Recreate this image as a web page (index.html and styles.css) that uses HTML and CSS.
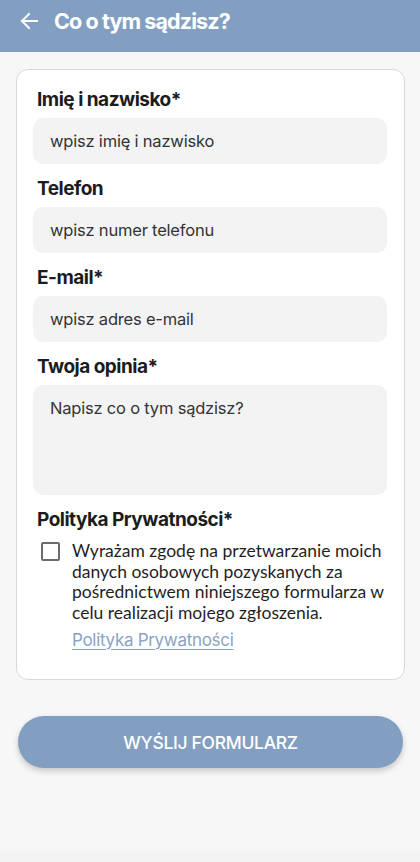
FILE: index.html
```html
<!DOCTYPE html>
<html lang="pl">
<head>
<meta charset="utf-8">
<title>Co o tym sądzisz?</title>
<link rel="stylesheet" href="styles.css">
</head>
<body>
<header class="topbar">
  <svg class="back" width="20" height="20" viewBox="0 0 20 20" aria-hidden="true">
    <path d="M18 10H3M10 3L3 10l7 7" fill="none" stroke="#fff" stroke-width="2" stroke-linecap="square"/>
  </svg>
  <h1 class="title">Co o tym sądzisz?</h1>
</header>
<main class="content">
  <form class="card">
    <label class="label">Imię i nazwisko*</label>
    <div class="field">wpisz imię i nazwisko</div>
    <label class="label">Telefon</label>
    <div class="field">wpisz numer telefonu</div>
    <label class="label">E-mail*</label>
    <div class="field">wpisz adres e-mail</div>
    <label class="label">Twoja opinia*</label>
    <div class="field area">Napisz co o tym sądzisz?</div>
    <label class="label">Polityka Prywatności*</label>
    <div class="consent">
      <span class="checkbox"></span>
      <div class="consent-body">
        <p class="consent-text">Wyrażam zgodę na przetwarzanie moich danych osobowych pozyskanych za pośrednictwem niniejszego formularza w celu realizacji mojego zgłoszenia.</p>
        <a class="policy-link">Polityka Prywatności</a>
      </div>
    </div>
  </form>
  <button class="submit" type="button">WYŚLIJ FORMULARZ</button>
</main>
</body>
</html>
```
FILE: styles.css
```css
* { box-sizing: border-box; }
html, body {
  margin: 0;
  font-family: Inter, "Open Sans", sans-serif;
  color: #1c1c1c;
}
html { background: #f3f3f3; }
body {
  min-height: 862px;
  /* page surface, with the slightly darker system strip along the bottom */
  background: linear-gradient(to bottom, #f7f7f7 849px, #f3f3f3 853px);
}
.topbar {
  height: 52px;
  background: #829fc2;
  display: flex;
  align-items: center;
  padding: 0 0 10px 19px;
  gap: 15px;
}
.back { flex: none; }
.title {
  margin: 0;
  color: #fff;
  font-size: 21.5px;
  font-weight: 700;
  letter-spacing: -0.9px;
}
.content {
  padding: 17px 15px 0 16px;
}
.card {
  background: #fff;
  border: 1px solid #d9d9d9;
  border-radius: 12px;
  padding: 18px 17px 29px 16px;
  display: flex;
  flex-direction: column;
}
.label {
  font-size: 19px;
  font-weight: 700;
  letter-spacing: -0.5px;
  padding-left: 4px;
  line-height: 24px;
  margin-bottom: 6px;
}
.field {
  background: #f3f3f3;
  border-radius: 10px;
  height: 46px;
  display: flex;
  align-items: center;
  padding-left: 17px;
  font-size: 16.5px;
  color: #333;
  margin-bottom: 13px;
  letter-spacing: -0.2px;
}
.field.area {
  height: 110px;
  align-items: flex-start;
  padding-top: 13px;
}
.consent {
  display: flex;
  gap: 12px;
  padding-left: 8px;
  margin-top: 3px;
}
.checkbox {
  flex: none;
  width: 19px;
  height: 19px;
  border: 2px solid #6b6b6b;
  border-radius: 2px;
  margin-top: 1px;
}
.consent-text {
  margin: 0;
  font-family: Lato, Inter, sans-serif;
  font-size: 17.5px;
  line-height: 20.5px;
  color: #1f1f1f;
}
.policy-link {
  display: inline-block;
  margin-top: 7px;
  font-size: 17px;
  line-height: 20px;
  color: #8aa3c2;
  text-decoration: underline;
  text-underline-offset: 3px;
  letter-spacing: -0.3px;
}
.submit {
  display: block;
  width: 385px;
  height: 52px;
  margin: 36px 0 0 2px;
  border: none;
  border-radius: 26px;
  background: #829fc2;
  color: #fff;
  font-family: inherit;
  font-size: 17.5px;
  font-weight: 500;
  letter-spacing: -0.3px;
  box-shadow: 0 3px 6px rgba(0,0,0,0.2);
}
```
